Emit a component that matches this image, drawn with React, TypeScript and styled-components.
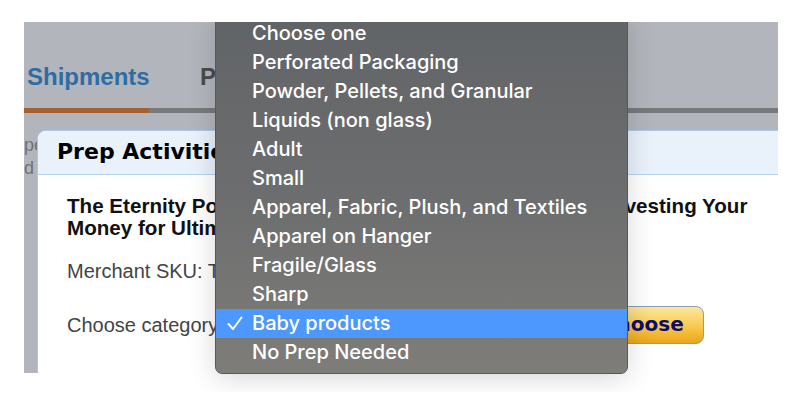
import React from "react";
import styled, { createGlobalStyle } from "styled-components";

const Global = createGlobalStyle`
  html, body {
    margin: 0;
    padding: 0;
    background: #ffffff;
  }
  body {
    font-family: "Liberation Sans", Arial, sans-serif;
  }
`;

const Stage = styled.div`
  position: relative;
  margin-top: 22px;
  height: 370px;
  overflow: hidden;
`;

const Frame = styled.div`
  position: relative;
  margin-left: 24px;
  width: 754px;
  height: 351px;
  background: #b2b6bc;
  overflow: hidden;
`;

const TabRow = styled.div`
  display: flex;
  align-items: flex-end;
  height: 86px;
`;

const Tab = styled.div<{ $active?: boolean }>`
  width: ${(p) => (p.$active ? "125px" : "auto")};
  padding: 0 0 17px ${(p) => (p.$active ? "3px" : "51px")};
  box-sizing: border-box;
  font-size: 24px;
  font-weight: bold;
  color: ${(p) => (p.$active ? "#2f6ca2" : "#4a4b4d")};
`;

const TabLine = styled.div`
  display: flex;
  height: 5px;
  background: #77797c;
`;

const TabMark = styled.div`
  width: 125px;
  background: #a5602f;
`;

const PageText = styled.div`
  padding-top: 21px;
  font-size: 18px;
  line-height: 23px;
  color: #6f7276;
`;

const Dialog = styled.div`
  position: absolute;
  left: 13px;
  top: 108px;
  width: 800px;
  height: 320px;
  background: #ffffff;
  border: 1px solid #a9c8e8;
  border-top-left-radius: 9px;
  overflow: hidden;
`;

const DialogHead = styled.div`
  display: flex;
  align-items: center;
  height: 44px;
  padding: 0 0 2px 19px;
  box-sizing: border-box;
  background: #e9f1fb;
  border-bottom: 1px solid #b5d2ee;
  font-family: "DejaVu Sans", Verdana, sans-serif;
  font-weight: bold;
  font-size: 22px;
  color: #000;
`;

const DialogBody = styled.div`
  padding: 20px 0 0 29px;
`;

const ItemTitle = styled.div`
  width: 700px;
  font-size: 20.6px;
  font-weight: bold;
  line-height: 22px;
  color: #111;
`;

const Line = styled.div<{ $top: number }>`
  margin-top: ${(p) => p.$top}px;
  display: flex;
  align-items: center;
  font-size: 20px;
  line-height: 23px;
  color: #444;
`;

const SelectBox = styled.div`
  width: 400px;
  height: 24px;
  margin-left: 8px;
  border: 1px solid #999;
  border-radius: 4px;
`;

const ChooseButton = styled.button`
  width: 104px;
  height: 38px;
  margin-left: -34px;
  border: 1px solid #8a9bb5;
  border-radius: 8px;
  background: linear-gradient(#fde79b 0%, #f9cf5c 45%, #f2b52c 80%, #e8a425 100%);
  font-family: "DejaVu Sans", Verdana, sans-serif;
  font-weight: bold;
  font-size: 20px;
  color: #0e0c6a;
  text-align: right;
  padding: 0 19px 2px 0;
`;

const Menu = styled.div`
  position: absolute;
  left: 215px;
  top: -9px;
  width: 413px;
  box-sizing: border-box;
  padding: 5px 0 6px;
  border-radius: 7px;
  border: 1px solid #56595c;
  background: linear-gradient(#616467 0%, #6c6d6e 50%, #7e7d79 100%);
  box-shadow: 0 4px 28px rgba(0, 0, 0, 0.16);
`;

const Option = styled.div<{ $selected?: boolean }>`
  display: flex;
  align-items: center;
  height: 29px;
  padding: 0 0 1px 36px;
  box-sizing: border-box;
  position: relative;
  background: ${(p) => (p.$selected ? "#4d98fe" : "transparent")};
  font-family: Inter, "Noto Sans", sans-serif;
  font-size: 20px;
  font-weight: 500;
  color: #ffffff;
`;

const Check = styled.svg`
  position: absolute;
  left: 11px;
  top: 7px;
`;

const options = [
  "Choose one",
  "Perforated Packaging",
  "Powder, Pellets, and Granular",
  "Liquids (non glass)",
  "Adult",
  "Small",
  "Apparel, Fabric, Plush, and Textiles",
  "Apparel on Hanger",
  "Fragile/Glass",
  "Sharp",
  "Baby products",
  "No Prep Needed",
];

export default function App() {
  const selected = "Baby products";
  return (
    <>
      <Global />
      <Stage>
        <Frame>
          <TabRow>
            <Tab $active>Shipments</Tab>
            <Tab>Problems</Tab>
          </TabRow>
          <TabLine>
            <TabMark />
          </TabLine>
          <PageText>
            <div>pe</div>
            <div>d</div>
          </PageText>
          <Dialog>
            <DialogHead>Prep Activities</DialogHead>
            <DialogBody>
              <ItemTitle>
                The Eternity Portfolio: A Timeless Guide to Saving and Investing Your Money for Ultimate Impact
              </ItemTitle>
              <Line $top={21}>Merchant SKU: TE-8Q2K-7MJ4</Line>
              <Line $top={23}>
                Choose category:
                <SelectBox />
                <ChooseButton>Choose</ChooseButton>
              </Line>
            </DialogBody>
          </Dialog>
        </Frame>
        <Menu>
          {options.map((o) => (
            <Option key={o} $selected={o === selected}>
              {o === selected && (
                <Check width="16" height="15" viewBox="0 0 16 15">
                  <polyline points="1.5,8 6,13 14.5,1.5" fill="none" stroke="#fff" strokeWidth="2" strokeLinecap="round" strokeLinejoin="round" />
                </Check>
              )}
              {o}
            </Option>
          ))}
        </Menu>
      </Stage>
    </>
  );
}
